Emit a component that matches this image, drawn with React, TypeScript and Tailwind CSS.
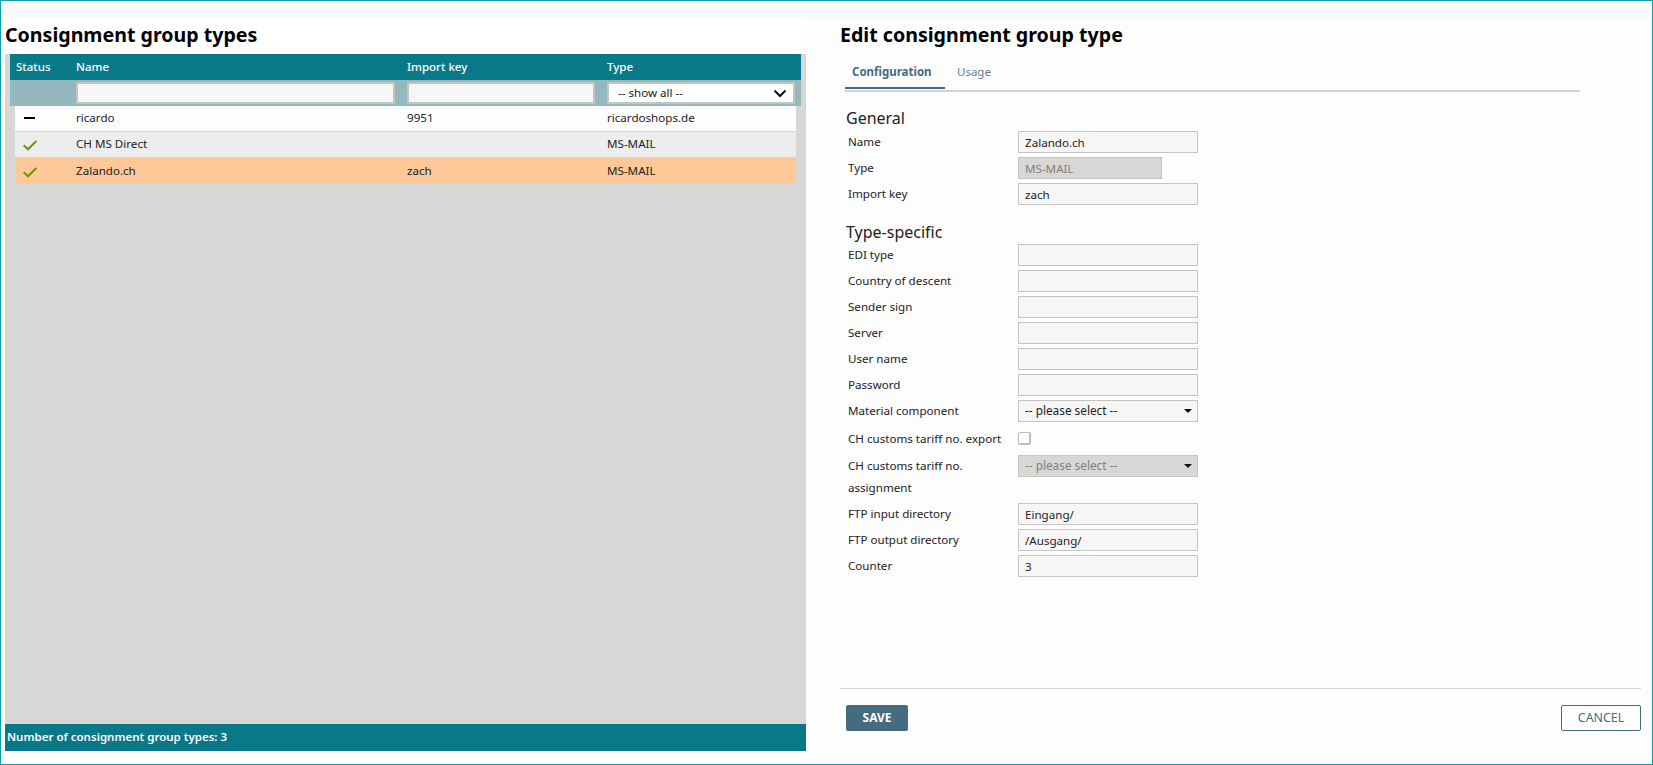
import React from 'react';

const font = "font-['Noto_Sans','Open_Sans',sans-serif]";

const groups = [
  { active: false, name: 'ricardo', key: '9951', type: 'ricardoshops.de', rowClass: 'bg-[#fdfdfd] border-b border-[#d8d7d5]' },
  { active: true, name: 'CH MS Direct', key: '', type: 'MS-MAIL', rowClass: 'bg-[#ededed] border-b border-[#d8d7d5]' },
  { active: true, name: 'Zalando.ch', key: 'zach', type: 'MS-MAIL', rowClass: 'bg-[#fec898]' },
];

const Check = () => (
  <svg width="14" height="11" viewBox="0 0 14 11" fill="none" className="mt-[3px]">
    <path d="M0.7 5.2 L5 9.3 L13.4 1" stroke="#5f9a0a" strokeWidth="2" />
  </svg>
);

const Caret = () => (
  <svg width="8" height="4" viewBox="0 0 8 4" className="absolute right-[5px] top-[8px]">
    <path d="M0 0 H8 L4 4 Z" fill="#111" />
  </svg>
);

const Field = ({ label, value = '', width = 'w-[180px]', disabled = false }: { label: string; value?: string; width?: string; disabled?: boolean }) => (
  <div className="flex h-[22px] items-center">
    <label className="w-[172px] pl-[2px] text-[11.6px] text-[#222]">{label}</label>
    <input
      readOnly
      value={value}
      className={`h-[22px] border border-[#c4c4c2] px-[6px] text-[11.6px] outline-none ${width} ${
        disabled ? 'bg-[#d8d7d5] text-[#808080]' : 'bg-[#f6f6f6] text-[#222]'
      }`}
    />
  </div>
);

const SelectBox = ({ disabled = false }: { disabled?: boolean }) => (
  <div
    className={`relative flex h-[22px] w-[180px] items-center border border-[#c4c4c2] px-[6px] text-[11.8px] ${
      disabled ? 'bg-[#d8d7d5] text-[#808080]' : 'bg-[#f6f6f6] text-[#222]'
    }`}
  >
    -- please select --
    <Caret />
  </div>
);

export default function App() {
  return (
    <div className={`flex h-[765px] w-[1653px] flex-col border border-[#0f9fa8] bg-[#fdfdfd] ${font}`}>
      <div className="h-[17px] shrink-0 bg-[#fafafa]" />
      <div className="flex min-h-0 flex-1">
        {/* list */}
        <div className="flex w-[805px] shrink-0 flex-col bg-white pb-[13px] pl-[4px]">
          <h1 className="flex h-[36px] shrink-0 items-center pb-[3px] text-[19.6px] font-bold text-black">Consignment group types</h1>
          <div className="flex min-h-0 flex-1 flex-col bg-[#d8d7d5] px-[5px]">
            <div className="grid h-[26px] shrink-0 grid-cols-[66px_331px_200px_1fr] items-center bg-[#09798a] text-[11.5px] font-medium text-white">
              <span className="pl-[6px]">Status</span>
              <span>Name</span>
              <span>Import key</span>
              <span>Type</span>
            </div>
            <div className="grid h-[26px] shrink-0 grid-cols-[66px_331px_200px_1fr] items-center bg-[#95b8bf]">
              <span />
              <input readOnly className="h-[22px] w-[319px] border-2 border-[#c4c4c2] bg-[#f6f6f6] outline-none" />
              <input readOnly className="h-[22px] w-[188px] border-2 border-[#c4c4c2] bg-[#f6f6f6] outline-none" />
              <div className="flex h-[22px] w-[188px] items-center justify-between border-2 border-[#c4c4c2] bg-white pl-[9px] pr-[6px] text-[11.6px] text-[#222]">
                -- show all --
                <svg width="14" height="9" viewBox="0 0 14 9" fill="none">
                  <path d="M1.5 1.5 L7 7 L12.5 1.5" stroke="#111" strokeWidth="2" />
                </svg>
              </div>
            </div>
            <div className="mx-[5px]">
              {groups.map((g) => (
                <div key={g.name} className={`grid h-[26px] grid-cols-[61px_331px_200px_1fr] items-center pb-[1px] text-[11.6px] text-[#222] ${g.rowClass}`}>
                  <span className="flex justify-start pl-[8px]">
                    {g.active ? <Check /> : <span className="ml-[1px] h-[2px] w-[11px] bg-black" />}
                  </span>
                  <span>{g.name}</span>
                  <span>{g.key}</span>
                  <span>{g.type}</span>
                </div>
              ))}
            </div>
          </div>
          <div className="flex h-[27px] shrink-0 items-center bg-[#09798a] pb-[1px] pl-[2px] text-[11.5px] font-semibold text-white">
            Number of consignment group types: 3
          </div>
        </div>

        {/* edit form */}
        <div className="flex min-w-0 flex-1 flex-col pl-[34px] pr-[11px]">
          <h1 className="flex h-[36px] shrink-0 items-center pb-[3px] text-[19.6px] font-bold text-black">Edit consignment group type</h1>
          <div className="ml-[5px] mr-[61px] mt-[2px] flex h-[36px] shrink-0 items-start border-b-2 border-[#cdd5dc] text-[11.5px]">
            <div className="flex h-[33px] w-[100px] items-center justify-start border-b-[2px] border-[#456b80] pl-[7px] font-bold text-[#456b80]">Configuration</div>
            <div className="flex h-[33px] items-center pb-[2px] pl-[12px] text-[#5d8093]">Usage</div>
          </div>

          <div className="ml-[6px] flex flex-1 flex-col">
            <h2 className="mb-[2px] mt-[13px] h-[24px] text-[16px] leading-[26px] text-[#222]">General</h2>
            <div className="flex flex-col gap-[4px]">
              <Field label="Name" value="Zalando.ch" />
              <Field label="Type" value="MS-MAIL" width="w-[144px]" disabled />
              <Field label="Import key" value="zach" />
            </div>
            <h2 className="mb-[2px] mt-[14px] h-[23px] text-[16px] leading-[27px] text-[#222]">Type-specific</h2>
            <div className="flex flex-col gap-[4px]">
              <Field label="EDI type" />
              <Field label="Country of descent" />
              <Field label="Sender sign" />
              <Field label="Server" />
              <Field label="User name" />
              <Field label="Password" />
              <div className="flex h-[22px] items-center">
                <label className="w-[172px] pl-[2px] text-[11.6px] text-[#222]">Material component</label>
                <SelectBox />
              </div>
              <div className="flex h-[25px] items-center">
                <label className="w-[172px] whitespace-nowrap pl-[2px] text-[11.6px] text-[#222]">CH customs tariff no. export</label>
                <span className="h-[13px] w-[13px] rounded-[2px] border border-b-2 border-r-2 border-[#bdbdbd] bg-white" />
              </div>
              <div className="flex h-[44px] items-start">
                <label className="w-[172px] pl-[2px] text-[11.6px] leading-[22px] text-[#222]">CH customs tariff no. assignment</label>
                <SelectBox disabled />
              </div>
              <Field label="FTP input directory" value="Eingang/" />
              <Field label="FTP output directory" value="/Ausgang/" />
              <Field label="Counter" value="3" />
            </div>
          </div>

          <div className="flex h-[76px] shrink-0 items-start justify-between border-t border-[#cdd5dc] pl-[6px] pt-[16px]">
            <button className="h-[26px] w-[62px] rounded-[2px] bg-[#456b80] text-[12px] font-bold text-white">SAVE</button>
            <button className="h-[26px] w-[80px] rounded-[2px] border border-[#456b80] bg-white text-[12.4px] text-[#456b80]">CANCEL</button>
          </div>
        </div>
      </div>
    </div>
  );
}
